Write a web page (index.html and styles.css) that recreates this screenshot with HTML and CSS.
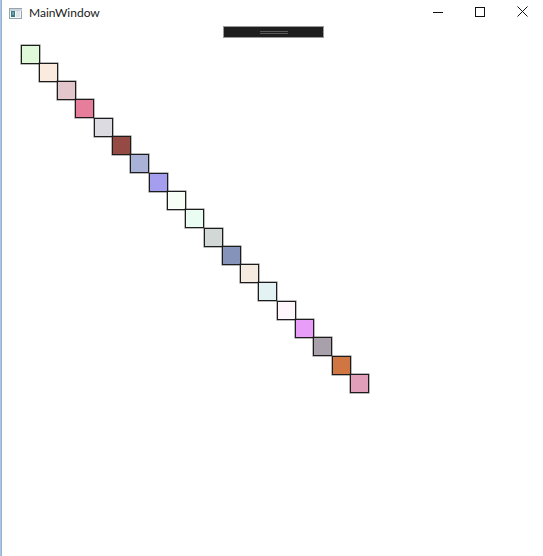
FILE: index.html
```html
<!DOCTYPE html>
<html>
<head>
<meta charset="utf-8">
<title>MainWindow</title>
<link rel="stylesheet" href="styles.css">
</head>
<body>
<div class="window">
  <header class="titlebar">
    <div class="title">
      <svg class="app-icon" width="13" height="11" viewBox="0 0 13 11">
        <rect x="0.5" y="0.5" width="12" height="10" fill="#f4f6f8" stroke="#9aa4ae"/>
        <rect x="1" y="1" width="12" height="2" fill="#c9d3dc"/>
        <rect x="2" y="3" width="4" height="6" fill="#3d7a7a"/>
        <rect x="3" y="4" width="2" height="3" fill="#6ea0b8"/>
        <rect x="7" y="3" width="4" height="6" fill="#dfe4e8"/>
      </svg>
      <span class="title-text">MainWindow</span>
    </div>
    <div class="controls">
      <span class="ctl"><svg width="10" height="10" viewBox="0 0 10 10"><line x1="0" y1="5.5" x2="10" y2="5.5" stroke="#111" stroke-width="1"/></svg></span>
      <span class="ctl"><svg width="10" height="10" viewBox="0 0 10 10"><rect x="0.5" y="0.5" width="9" height="9" fill="none" stroke="#111" stroke-width="1"/></svg></span>
      <span class="ctl"><svg width="11" height="11" viewBox="0 0 11 11"><path d="M0.5 0.5 L10.5 10.5 M10.5 0.5 L0.5 10.5" stroke="#111" stroke-width="1" fill="none"/></svg></span>
    </div>
  </header>
  <main class="client">
    <div class="toolbar"><span class="grip"></span></div>
    <div class="canvas">
      <div class="sq" style="--i:0;--c:#dff9d9"></div>
      <div class="sq" style="--i:1;--c:#fbeade"></div>
      <div class="sq" style="--i:2;--c:#e3c6cb"></div>
      <div class="sq" style="--i:3;--c:#e67e9b"></div>
      <div class="sq" style="--i:4;--c:#dcdbe1"></div>
      <div class="sq" style="--i:5;--c:#954a44"></div>
      <div class="sq" style="--i:6;--c:#a9b1d6"></div>
      <div class="sq" style="--i:7;--c:#a59ded"></div>
      <div class="sq" style="--i:8;--c:#f7fef5"></div>
      <div class="sq" style="--i:9;--c:#eafdf2"></div>
      <div class="sq" style="--i:10;--c:#d2d8d6"></div>
      <div class="sq" style="--i:11;--c:#8593ba"></div>
      <div class="sq" style="--i:12;--c:#f5ebe0"></div>
      <div class="sq" style="--i:13;--c:#e3f2f2"></div>
      <div class="sq" style="--i:14;--c:#fff6fd"></div>
      <div class="sq" style="--i:15;--c:#e89df8"></div>
      <div class="sq" style="--i:16;--c:#a8a1ac"></div>
      <div class="sq" style="--i:17;--c:#cf7642"></div>
      <div class="sq" style="--i:18;--c:#e19fba"></div>
    </div>
  </main>
</div>
</body>
</html>
```
FILE: styles.css
```css
html, body {
  margin: 0;
  padding: 0;
  background: #ffffff;
}

.window {
  width: 543px;
  height: 556px;
  box-sizing: border-box;
  border-left: 1px solid #b9c3cc;
  position: relative;
  display: flex;
  flex-direction: column;
  overflow: hidden;
}

.window::before {
  content: "";
  position: absolute;
  left: 0;
  top: 0;
  bottom: 0;
  width: 1px;
  background: #8ab4e6;
}

.titlebar {
  height: 30px;
  display: flex;
  align-items: flex-start;
  justify-content: space-between;
  background: #ffffff;
}

.title {
  display: flex;
  align-items: center;
  padding: 7px 0 0 8px;
  gap: 7px;
}

.app-icon {
  display: block;
}

.title-text {
  font-family: "Segoe UI", Lato, "Noto Sans", sans-serif;
  font-size: 12px;
  color: #1a1a1a;
  line-height: 12px;
}

.controls {
  display: flex;
}

.ctl {
  width: 42px;
  height: 23px;
  display: flex;
  align-items: center;
  justify-content: center;
}

.ctl svg {
  display: block;
}

.client {
  flex: 1;
  position: relative;
}

.toolbar {
  position: absolute;
  left: 222px;
  top: -4px;
  width: 99px;
  height: 10px;
  background: #1e1e1e;
  border: 1px solid #9a9a9a;
  display: flex;
  align-items: center;
  justify-content: center;
}

.grip {
  width: 28px;
  height: 1px;
  border-top: 1px solid #5a5a5a;
  border-bottom: 1px solid #5a5a5a;
}

.canvas {
  position: absolute;
  inset: 0;
}

.sq {
  position: absolute;
  left: calc(19.5px + var(--i) * 18.3px);
  top: calc(14.5px + var(--i) * 18.3px);
  width: 17px;
  height: 17px;
  background: var(--c);
  border: 1px solid #1c1c1c;
  box-shadow: 0 0 0 0.6px rgba(40, 40, 40, 0.55);
}
```
